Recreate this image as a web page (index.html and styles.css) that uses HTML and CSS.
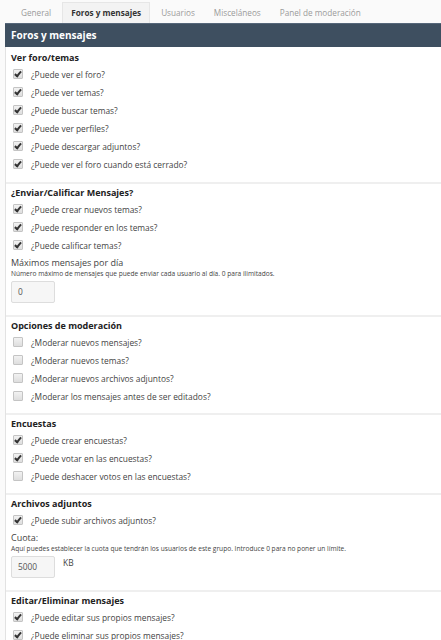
FILE: index.html
```html
<!DOCTYPE html>
<html lang="es">
<head>
    <meta charset="UTF-8">
    <title>Permisos del grupo</title>
    <link rel="stylesheet" href="styles.css">
</head>
<body>
    <div class="tabs">
        <span class="tab">General</span>
        <span class="tab active">Foros y mensajes</span>
        <span class="tab">Usuarios</span>
        <span class="tab">Misceláneos</span>
        <span class="tab">Panel de moderación</span>
    </div>
    <div class="panel">
        <div class="panel-title">Foros y mensajes</div>
        <div class="panel-body">
            <!-- Ver foro/temas -->
            <div class="section first">
                <div class="section-title">Ver foro/temas</div>
                <div class="check"><span class="box on"></span>¿Puede ver el foro?</div>
                <div class="check"><span class="box on"></span>¿Puede ver temas?</div>
                <div class="check"><span class="box on"></span>¿Puede buscar temas?</div>
                <div class="check"><span class="box on"></span>¿Puede ver perfiles?</div>
                <div class="check"><span class="box on"></span>¿Puede descargar adjuntos?</div>
                <div class="check"><span class="box on"></span>¿Puede ver el foro cuando está cerrado?</div>
            </div>

            <!-- Enviar/Calificar -->
            <div class="section">
                <div class="section-title">¿Enviar/Calificar Mensajes?</div>
                <div class="check"><span class="box on"></span>¿Puede crear nuevos temas?</div>
                <div class="check"><span class="box on"></span>¿Puede responder en los temas?</div>
                <div class="check"><span class="box on"></span>¿Puede calificar temas?</div>
                <div class="field">
                    <div class="field-label">Máximos mensajes por día</div>
                    <div class="field-desc">Número máximo de mensajes que puede enviar cada usuario al día. 0 para ilimitados.</div>
                    <div class="field-row"><span class="input">0</span></div>
                </div>
            </div>

            <!-- Moderacion -->
            <div class="section">
                <div class="section-title">Opciones de moderación</div>
                <div class="check"><span class="box"></span>¿Moderar nuevos mensajes?</div>
                <div class="check"><span class="box"></span>¿Moderar nuevos temas?</div>
                <div class="check"><span class="box"></span>¿Moderar nuevos archivos adjuntos?</div>
                <div class="check"><span class="box"></span>¿Moderar los mensajes antes de ser editados?</div>
            </div>

            <!-- Encuestas -->
            <div class="section">
                <div class="section-title">Encuestas</div>
                <div class="check"><span class="box on"></span>¿Puede crear encuestas?</div>
                <div class="check"><span class="box on"></span>¿Puede votar en las encuestas?</div>
                <div class="check"><span class="box"></span>¿Puede deshacer votos en las encuestas?</div>
            </div>

            <!-- Archivos adjuntos -->
            <div class="section">
                <div class="section-title">Archivos adjuntos</div>
                <div class="check"><span class="box on"></span>¿Puede subir archivos adjuntos?</div>
                <div class="field">
                    <div class="field-label">Cuota:</div>
                    <div class="field-desc">Aquí puedes establecer la cuota que tendrán los usuarios de este grupo. Introduce 0 para no poner un límite.</div>
                    <div class="field-row"><span class="input">5000</span><span class="unit">KB</span></div>
                </div>
            </div>

            <!-- Editar/Eliminar -->
            <div class="section">
                <div class="section-title">Editar/Eliminar mensajes</div>
                <div class="check"><span class="box on"></span>¿Puede editar sus propios mensajes?</div>
                <div class="check"><span class="box on"></span>¿Puede eliminar sus propios mensajes?</div>
            </div>
        </div>
    </div>
</body>
</html>
```

FILE: styles.css
```css
body {
    font-family: "Open Sans", "DejaVu Sans", sans-serif;
    font-size: 8.4px;
    color: #444;
    margin: 0;
    padding: 0;
    background-color: #fafafa;
}
.tabs {
    display: flex;
    height: 23px;
    padding-left: 13px;
    align-items: flex-end;
}
.tab {
    padding: 0 8px;
    height: 20px;
    line-height: 19px;
    color: #9a9a9a;
    font-size: 8.2px;
    margin-right: 3px;
}
.tab.active {
    background-color: #f3f3f3;
    border: 1px solid #e6e6e6;
    border-bottom: none;
    color: #333;
    font-weight: bold;
}
.panel {
    margin-left: 5px;
}
.panel-title {
    height: 24px;
    line-height: 23px;
    padding-left: 6px;
    background-color: #3e4f60;
    border-top: 1px solid #56677a;
    box-sizing: border-box;
    color: #fff;
    font-weight: bold;
    font-size: 10px;
}
.panel-body {
    background-color: #fff;
    border-left: 1px solid #e2e2e2;
}
.section {
    padding: 2px 0 8px 5px;
    border-bottom: 2px solid #efefef;
}
.section.first {
    padding-top: 4px;
    padding-bottom: 9px;
}
.section-title {
    font-weight: bold;
    font-size: 9px;
    color: #222;
    line-height: 14px;
}
.check {
    display: flex;
    align-items: center;
    height: 18px;
    padding-left: 2px;
}
.box {
    width: 8px;
    height: 8px;
    border: 1px solid #c4c4c4;
    border-radius: 1px;
    background: linear-gradient(#f2f2f2, #dedede);
    margin-right: 8px;
    position: relative;
}
.box.on::after {
    content: "";
    position: absolute;
    left: 2px;
    top: 0;
    width: 2px;
    height: 5px;
    border: solid #333;
    border-width: 0 2px 2px 0;
    transform: rotate(40deg);
}
.field {
    padding: 3px 0 4px;
}
.field-label {
    font-size: 9px;
    line-height: 12px;
}
.field-desc {
    font-size: 6.6px;
    line-height: 10px;
}
.field-row {
    display: flex;
    align-items: flex-start;
    margin-top: 2px;
}
.input {
    width: 44px;
    height: 22px;
    box-sizing: border-box;
    border: 1px solid #ddd;
    border-radius: 2px;
    background-color: #f6f6f6;
    line-height: 20px;
    padding-left: 6px;
    color: #555;
}
.unit {
    margin-left: 8px;
    line-height: 14px;
}
```
